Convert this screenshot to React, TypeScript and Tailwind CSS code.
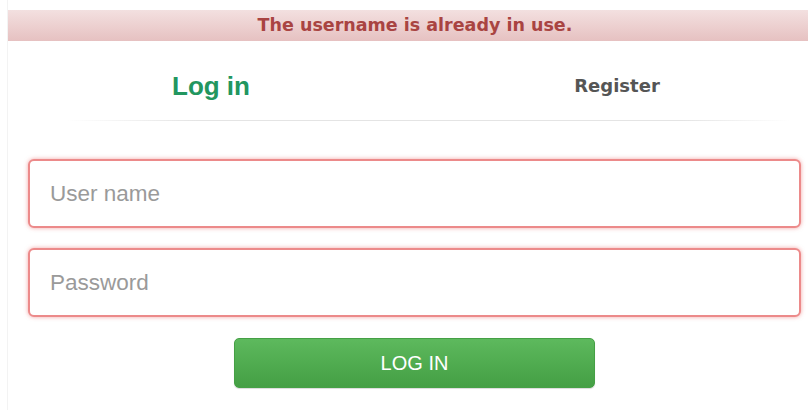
import React from "react";

export default function App() {
  return (
    <div className="h-[410px] w-[808px] overflow-hidden bg-white pl-[7px]">
      <div className="flex h-full flex-col border-l border-[#f3f3f3]">
        {/* error banner */}
        <div className="mt-[10px] flex h-[31px] items-center justify-center bg-gradient-to-b from-[#f3e0e0] to-[#e6c1c1] pl-[14px] font-['DejaVu_Sans',sans-serif] text-[17.5px] font-bold text-[#a94442]">
          The username is already in use.
        </div>

        {/* tabs */}
        <div className="flex h-[79px] items-center">
          <div className="w-[406px] pt-[12px] text-center font-['Liberation_Sans',Arial,sans-serif] text-[26px] font-bold text-[#22965f]">
            Log in
          </div>
          <div className="flex-1 pl-3 pt-[10px] text-center font-['DejaVu_Sans',sans-serif] text-[18px] font-bold text-[#555555]">
            Register
          </div>
        </div>
        <div className="ml-[58px] mr-[18px] h-px bg-[linear-gradient(to_right,transparent,#e4e4e4_18%,#e4e4e4_85%,transparent)]" />

        {/* form */}
        <form className="mt-[38px] flex flex-col gap-[20px] pl-[20px] pr-[7px]">
          <input
            type="text"
            placeholder="User name"
            className="h-[69px] rounded-md border-2 border-[#ec8a8a] bg-white px-[20px] font-['Liberation_Sans',Arial,sans-serif] text-[22.5px] text-[#333] shadow-[0_0_4px_rgba(230,90,90,0.55)] outline-none placeholder:text-[#9a9a9a]"
          />
          <input
            type="password"
            placeholder="Password"
            className="h-[69px] rounded-md border-2 border-[#ec8a8a] bg-white px-[20px] font-['Liberation_Sans',Arial,sans-serif] text-[22.5px] text-[#333] shadow-[0_0_4px_rgba(230,90,90,0.55)] outline-none placeholder:text-[#9a9a9a]"
          />
        </form>

        <div className="mt-[21px] flex pl-[226px]">
          <button
            type="button"
            className="h-[50px] w-[361px] rounded-[5px] border border-[#45a045] bg-gradient-to-b from-[#5db95d] to-[#449f44] font-['Liberation_Sans',Arial,sans-serif] text-[20px] text-white shadow-[0_1px_1px_rgba(0,0,0,0.15)]"
          >
            LOG IN
          </button>
        </div>
      </div>
    </div>
  );
}
